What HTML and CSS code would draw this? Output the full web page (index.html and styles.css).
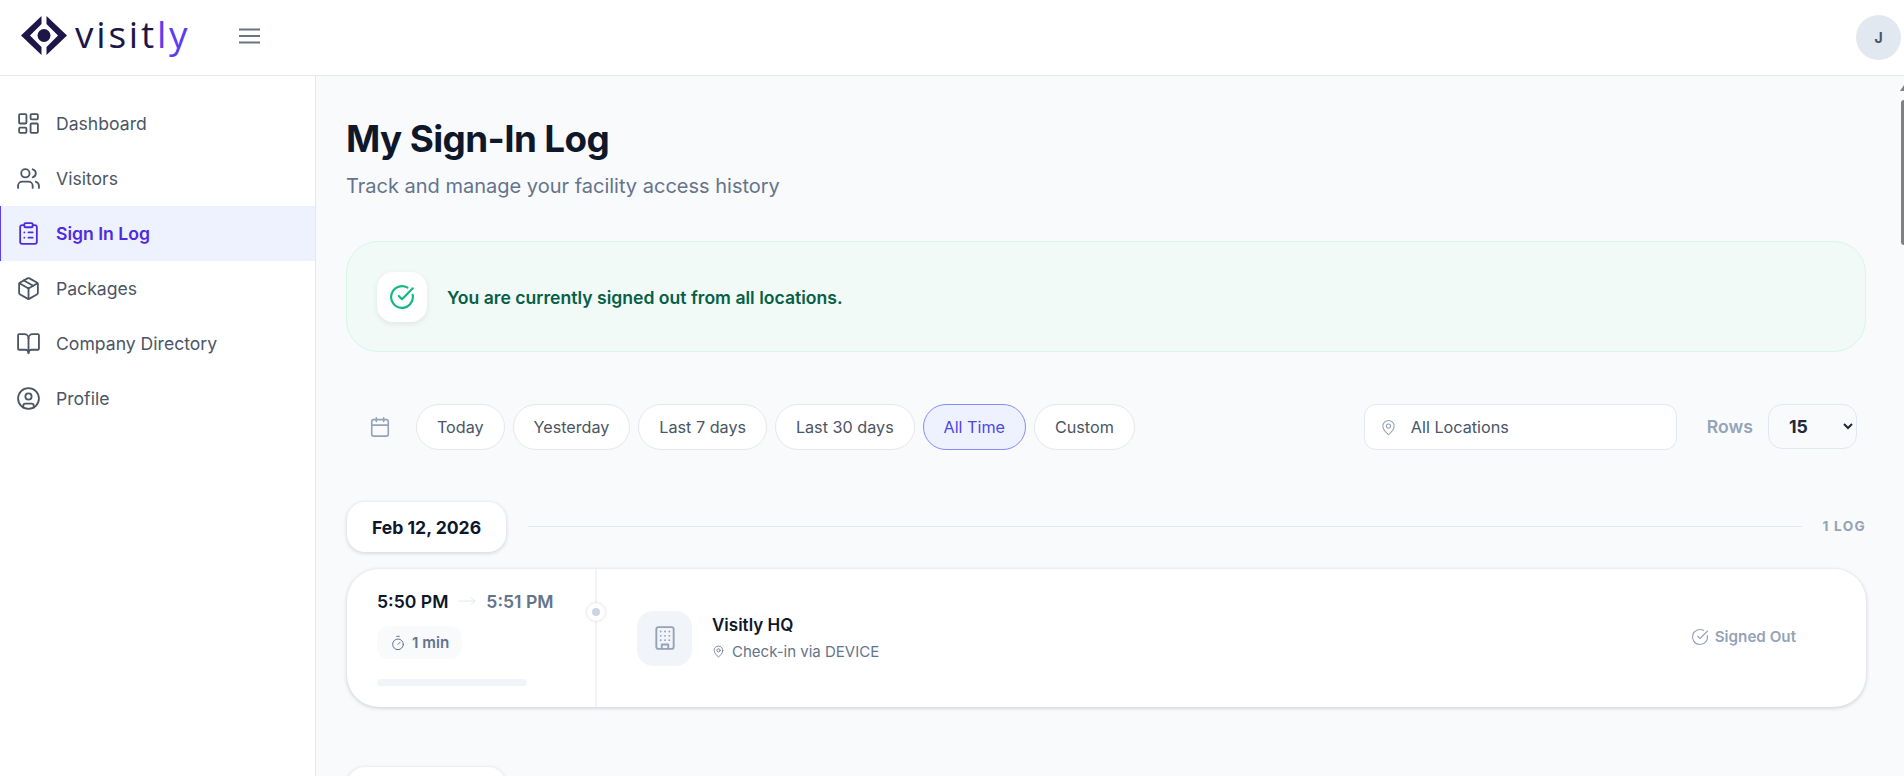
FILE: index.html
```html
<!DOCTYPE html>
<html lang="en">
<head>
  <meta charset="UTF-8">
  <meta name="viewport" content="width=device-width, initial-scale=1.0">
  <title>My Sign-In Log</title>
  <link rel="stylesheet" href="styles.css">
</head>
<body>

  <header class="topbar">
    <div class="logo">
      <svg class="logo-mark" viewBox="0 0 46 39">
        <path d="M20.5 0 L0 19.5 L20.5 39 L20.5 31 L9 19.5 L20.5 8 Z" fill="#1e1548"/>
        <path d="M25.5 0 L46 19.5 L25.5 39 L25.5 31 L37 19.5 L25.5 8 Z" fill="#1e1548"/>
        <circle cx="23" cy="19.5" r="6.5" fill="#1e1548"/>
      </svg>
      <span class="logo-text">visit<span class="logo-accent">ly</span></span>
    </div>
    <svg class="menu-btn" viewBox="0 0 21 16" fill="none" stroke="#6b7280" stroke-width="2">
      <path d="M0 1.5h21M0 8h21M0 14.5h21"/>
    </svg>
    <div class="avatar">J</div>
  </header>

  <div class="layout">
    <nav class="sidebar">
      <a class="nav-item">
        <svg class="nav-icon" viewBox="0 0 24 24"><rect x="3" y="3" width="7" height="9" rx="1"/><rect x="14" y="3" width="7" height="5" rx="1"/><rect x="14" y="12" width="7" height="9" rx="1"/><rect x="3" y="16" width="7" height="5" rx="1"/></svg>
        Dashboard
      </a>
      <a class="nav-item">
        <svg class="nav-icon" viewBox="0 0 24 24"><path d="M16 21v-2a4 4 0 0 0-4-4H6a4 4 0 0 0-4 4v2"/><circle cx="9" cy="7" r="4"/><path d="M22 21v-2a4 4 0 0 0-3-3.87"/><path d="M16 3.13a4 4 0 0 1 0 7.75"/></svg>
        Visitors
      </a>
      <a class="nav-item active">
        <svg class="nav-icon" viewBox="0 0 24 24"><rect x="8" y="2" width="8" height="4" rx="1"/><path d="M16 4h2a2 2 0 0 1 2 2v14a2 2 0 0 1-2 2H6a2 2 0 0 1-2-2V6a2 2 0 0 1 2-2h2"/><path d="M12 11h4"/><path d="M12 16h4"/><path d="M8 11h.01"/><path d="M8 16h.01"/></svg>
        Sign In Log
      </a>
      <a class="nav-item">
        <svg class="nav-icon" viewBox="0 0 24 24"><path d="M11 21.730a2 2 0 0 0 2 0l7-4A2 2 0 0 0 21 16V8a2 2 0 0 0-1-1.730l-7-4a2 2 0 0 0-2 0l-7 4A2 2 0 0 0 3 8v8a2 2 0 0 0 1 1.730z"/><path d="M12 22V12"/><path d="M3.290 7 12 12l8.710-5"/><path d="m7.500 4.270 9 5.150"/></svg>
        Packages
      </a>
      <a class="nav-item">
        <svg class="nav-icon" viewBox="0 0 24 24"><path d="M12 7v14"/><path d="M3 18a1 1 0 0 1-1-1V4a1 1 0 0 1 1-1h5a4 4 0 0 1 4 4 4 4 0 0 1 4-4h5a1 1 0 0 1 1 1v13a1 1 0 0 1-1 1h-6a3 3 0 0 0-3 3 3 3 0 0 0-3-3z"/></svg>
        Company Directory
      </a>
      <a class="nav-item">
        <svg class="nav-icon" viewBox="0 0 24 24"><circle cx="12" cy="12" r="10"/><circle cx="12" cy="10" r="3"/><path d="M7 20.662V19a2 2 0 0 1 2-2h6a2 2 0 0 1 2 2v1.662"/></svg>
        Profile
      </a>
    </nav>

    <main class="content">
      <h1 class="page-title">My Sign-In Log</h1>
      <p class="page-sub">Track and manage your facility access history</p>

      <div class="status-banner">
        <div class="status-icon">
          <svg viewBox="0 0 24 24"><path d="M21.801 10A10 10 0 1 1 17 3.335"/><path d="m9 11 3 3L22 4"/></svg>
        </div>
        <span class="status-text">You are currently signed out from all locations.</span>
      </div>

      <div class="filters">
        <div class="filter-left">
          <svg class="filter-cal" viewBox="0 0 24 24"><path d="M8 2v4"/><path d="M16 2v4"/><rect x="3" y="4" width="18" height="18" rx="2"/><path d="M3 10h18"/></svg>
          <button class="pill">Today</button>
          <button class="pill">Yesterday</button>
          <button class="pill">Last 7 days</button>
          <button class="pill">Last 30 days</button>
          <button class="pill selected">All Time</button>
          <button class="pill">Custom</button>
        </div>
        <div class="filter-right">
          <div class="location-box">
            <svg viewBox="0 0 24 24"><path d="M20 10c0 4.993-5.539 10.193-7.399 11.799a1 1 0 0 1-1.202 0C9.539 20.193 4 14.993 4 10a8 8 0 0 1 16 0"/><circle cx="12" cy="10" r="3"/></svg>
            All Locations
          </div>
          <label class="rows-label">Rows</label>
          <select class="rows-select">
            <option>15</option>
          </select>
        </div>
      </div>

      <section class="log-section">
        <div class="date-row">
          <div class="date-pill">Feb 12, 2026</div>
          <div class="date-line"></div>
          <div class="date-count">1 LOG</div>
        </div>

        <div class="log-card">
          <div class="log-time">
            <div class="time-row">
              <span class="time-in">5:50 PM</span>
              <svg class="time-arrow" viewBox="0 0 18 10"><path d="M0 5h17M13 1.500 17 5l-4 3.500"/></svg>
              <span class="time-out">5:51 PM</span>
            </div>
            <div class="duration">
              <svg viewBox="0 0 24 24"><path d="M10 2h4"/><path d="m12 14 3-3"/><circle cx="12" cy="14" r="8"/></svg>
              1 min
            </div>
            <div class="duration-bar"></div>
            <span class="time-dot"></span>
          </div>
          <div class="log-body">
            <div class="place-icon">
              <svg viewBox="0 0 24 24"><rect x="4" y="2" width="16" height="20" rx="2"/><path d="M9 22v-4h6v4"/><path d="M8 6h.01"/><path d="M16 6h.01"/><path d="M12 6h.01"/><path d="M12 10h.01"/><path d="M12 14h.01"/><path d="M16 10h.01"/><path d="M16 14h.01"/><path d="M8 10h.01"/><path d="M8 14h.01"/></svg>
            </div>
            <div class="place-info">
              <div class="place-name">Visitly HQ</div>
              <div class="place-sub">
                <svg viewBox="0 0 24 24"><path d="M20 10c0 4.993-5.539 10.193-7.399 11.799a1 1 0 0 1-1.202 0C9.539 20.193 4 14.993 4 10a8 8 0 0 1 16 0"/><circle cx="12" cy="10" r="3"/></svg>
                Check-in via DEVICE
              </div>
            </div>
            <div class="log-status">
              <svg viewBox="0 0 24 24"><path d="M21.801 10A10 10 0 1 1 17 3.335"/><path d="m9 11 3 3L22 4"/></svg>
              Signed Out
            </div>
          </div>
        </div>

        <div class="date-row next">
          <div class="date-pill">Feb 11, 2026</div>
        </div>
      </section>

      <!-- scrollbar, cut off at the window edge -->
      <div class="scroll-arrow"></div>
      <div class="scroll-thumb"></div>
    </main>
  </div>

</body>
</html>
```

FILE: styles.css
```css
* {
  box-sizing: border-box;
}
html, body {
  height: 100%;
}
body {
  margin: 0;
  overflow: hidden;
  background-color: #fff;
  color: #0f172a;
  font-family: Inter, "Liberation Sans", sans-serif;
}
svg {
  fill: none;
  stroke: currentColor;
  stroke-linecap: round;
  stroke-linejoin: round;
  stroke-width: 1.5;
  flex-shrink: 0;
}

/* top bar */
.topbar {
  display: flex;
  align-items: center;
  height: 76px;
  padding: 0 3px 0 21px;
  background-color: #fff;
  border-bottom: 1px solid #e5e7eb;
}
.logo {
  display: flex;
  align-items: center;
  gap: 8px;
  width: 218px;
}
.logo-mark {
  width: 46px;
  height: 39px;
  margin-top: -4px;
  stroke: none;
}
.logo-text {
  font-family: "Open Sans", sans-serif;
  font-size: 37px;
  font-weight: 400;
  line-height: 1;
  letter-spacing: 2.8px;
  color: #1e1548;
  margin-top: -8px;
}
.logo-accent {
  color: #5b3df5;
}
.menu-btn {
  width: 21px;
  height: 16px;
  margin-top: -3px;
  stroke-linecap: butt;
  stroke: #6b7280;
  stroke-width: 2;
}
.avatar {
  display: flex;
  align-items: center;
  justify-content: center;
  width: 45px;
  height: 45px;
  margin-left: auto;
  border-radius: 50%;
  background-color: #e2e8f0;
  color: #475569;
  font-size: 14px;
  font-weight: 700;
}

.layout {
  display: flex;
  height: 700px;
}

/* sidebar */
.sidebar {
  width: 316px;
  flex-shrink: 0;
  padding-top: 20px;
  background-color: #fff;
  border-right: 1px solid #e5e7eb;
}
.nav-item {
  display: flex;
  align-items: center;
  gap: 15px;
  height: 55px;
  padding-left: 16px;
  color: #4b5563;
  font-size: 17.6px;
}
.nav-icon {
  width: 25px;
  height: 25px;
  stroke-width: 1.75;
}
.nav-item.active {
  background-color: #eef2ff;
  color: #4f2be0;
  font-weight: 600;
  box-shadow: inset 1px 0 0 #5b3df5;
}

/* main column */
.content {
  position: relative;
  flex: 1;
  overflow: hidden;
  padding: 37px 38px 0 30px;
  background-color: #f9fafc;
}
.page-title {
  margin: 0;
  font-size: 36.8px;
  font-weight: 700;
  line-height: 52px;
  letter-spacing: -0.6px;
  color: #0f172a;
}
.page-sub {
  margin: 7px 0 0;
  font-size: 20px;
  line-height: 28px;
  color: #64748b;
}

.status-banner {
  display: flex;
  align-items: center;
  gap: 20px;
  height: 111px;
  margin-top: 41px;
  padding-left: 30px;
  background-color: #f1faf6;
  border: 1px solid #d5f7e6;
  border-radius: 32px;
}
.status-icon {
  display: flex;
  align-items: center;
  justify-content: center;
  width: 50px;
  height: 50px;
  background-color: #fff;
  border-radius: 16px;
  box-shadow: 0 2px 6px rgba(0, 0, 0, 0.08);
  color: #10b981;
}
.status-icon svg {
  width: 26px;
  height: 26px;
  stroke-width: 2;
}
.status-text {
  margin-top: 1px;
  font-size: 17.6px;
  font-weight: 640;
  color: #065f46;
}

/* filters */
.filters {
  display: flex;
  justify-content: space-between;
  align-items: flex-start;
  margin-top: 52px;
  padding-right: 9px;
}
.filter-left {
  display: flex;
  align-items: center;
  gap: 8px;
}
.filter-cal {
  width: 22px;
  height: 22px;
  margin: 0 17px 0 23px;
  color: #94a3b8;
  stroke-width: 1.75;
}
.pill {
  height: 46px;
  padding: 0 19.92px;
  background-color: #fff;
  border: 1px solid #e5e7eb;
  border-radius: 23px;
  color: #4b5563;
  font-family: inherit;
  font-size: 16.2px;
}
.pill.selected {
  background-color: #eef2ff;
  border-color: #818cf8;
  color: #4f46e5;
}
.filter-right {
  display: flex;
  align-items: flex-start;
}
.location-box {
  display: flex;
  align-items: center;
  gap: 14px;
  width: 313px;
  height: 46px;
  padding-left: 15px;
  background-color: #fff;
  border: 1px solid #e2e8f0;
  border-radius: 12px;
  color: #475569;
  font-size: 16.2px;
}
.location-box svg {
  width: 17px;
  height: 17px;
  color: #94a3b8;
}
.rows-label {
  margin: 0 15px 0 30px;
  color: #94a3b8;
  font-size: 17.6px;
  font-weight: 600;
  line-height: 45px;
}
.rows-select {
  width: 89px;
  height: 45px;
  padding-left: 16px;
  background-color: #f8fafc;
  border: 1px solid #e2e8f0;
  border-radius: 14px;
  color: #1e293b;
  font-family: inherit;
  font-size: 17.6px;
  font-weight: 700;
}

/* log list */
.log-section {
  margin: 40px 0 0;
  padding-top: 12px;
  background-color: #f8fafc;
}
.date-row {
  display: flex;
  align-items: center;
  gap: 20px;
}
.date-row.next {
  margin-top: 60px;
}
.date-pill {
  display: flex;
  align-items: center;
  justify-content: center;
  width: 159px;
  height: 50px;
  margin-left: 1px;
  background-color: #fff;
  border-radius: 18px;
  box-shadow: 0 1px 4px rgba(15, 23, 42, 0.18);
  font-size: 17.6px;
  font-weight: 700;
  color: #0f172a;
}
.date-line {
  flex: 1;
  height: 1px;
  margin: -2px 0 0 2px;
  background-color: #e2e8f0;
}
.date-count {
  color: #94a3b8;
  font-size: 13.6px;
  font-weight: 700;
  letter-spacing: 1.3px;
  margin-top: -2px;
}
.log-card {
  display: flex;
  height: 138px;
  margin: 17px 0 0 1px;
  background-color: #fff;
  border-radius: 32px;
  box-shadow: 0 1px 4px rgba(15, 23, 42, 0.2);
}
.log-time {
  position: relative;
  width: 250px;
  flex-shrink: 0;
  padding: 21px 0 0 30px;
  border-right: 2px solid #f1f5f9;
}
.time-row {
  display: flex;
  align-items: center;
  height: 22px;
  font-size: 17.6px;
  font-weight: 600;
}
.time-in {
  color: #0f172a;
}
.time-arrow {
  width: 18px;
  height: 10px;
  margin: 0 10px;
  color: #e2e8f0;
  stroke-width: 1;
}
.time-out {
  color: #64748b;
}
.duration {
  display: flex;
  align-items: center;
  gap: 6px;
  width: 85px;
  height: 33px;
  margin-top: 14px;
  padding-left: 13px;
  background-color: #f8fafc;
  border-radius: 12px;
  color: #64748b;
  font-size: 15.2px;
  font-weight: 600;
}
.duration svg {
  width: 16px;
  height: 16px;
}
.duration-bar {
  width: 150px;
  height: 7px;
  margin-top: 20px;
  background-color: #f1f5f9;
  border-radius: 4px;
}
.time-dot {
  position: absolute;
  top: 34px;
  right: -10px;
  width: 18px;
  height: 18px;
  background-color: #fff;
  border-radius: 50%;
  box-shadow: 0 0 3px rgba(15, 23, 42, 0.2);
}
.time-dot::after {
  content: "";
  position: absolute;
  top: 5px;
  left: 5px;
  width: 8px;
  height: 8px;
  background-color: #cbd5e1;
  border-radius: 50%;
}
.log-body {
  display: flex;
  align-items: center;
  flex: 1;
  padding: 0 70px 0 40px;
}
.place-icon {
  display: flex;
  align-items: center;
  justify-content: center;
  width: 55px;
  height: 55px;
  background-color: #f1f5f9;
  border-radius: 16px;
  color: #94a3b8;
}
.place-icon svg {
  width: 26px;
  height: 26px;
  stroke-width: 1.75;
}
.place-info {
  margin: -1px 0 0 20px;
}
.place-name {
  font-size: 17px;
  font-weight: 600;
  color: #0f172a;
}
.place-sub {
  display: flex;
  align-items: center;
  gap: 7px;
  margin-top: 7px;
  color: #64748b;
  font-size: 15px;
}
.place-sub svg {
  width: 13px;
  height: 13px;
}
.log-status {
  display: flex;
  align-items: center;
  gap: 6px;
  margin-top: -3px;
  margin-left: auto;
  color: #94a3b8;
  font-size: 15.2px;
  font-weight: 600;
}
.log-status svg {
  width: 18px;
  height: 18px;
}

/* scrollbar */
.scroll-arrow {
  position: absolute;
  top: 9px;
  right: 0;
  border-left: 4px solid transparent;
  border-bottom: 6px solid #808080;
}
.scroll-thumb {
  position: absolute;
  top: 24px;
  right: 0;
  width: 3px;
  height: 145px;
  background-color: #808080;
  border-radius: 3px 0 0 3px;
}
```
